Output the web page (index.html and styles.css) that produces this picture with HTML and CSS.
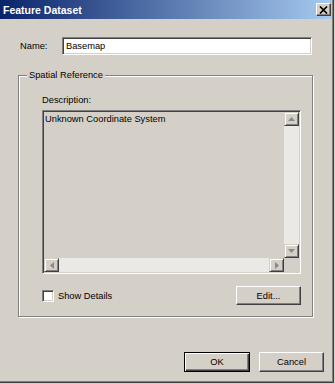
FILE: index.html
```html
<!DOCTYPE html>
<html>
<head>
<meta charset="utf-8">
<link rel="stylesheet" href="styles.css">
</head>
<body>
<div class="window">
  <div class="titlebar">
    <span class="title">Feature Dataset</span>
    <span class="close"><svg width="9" height="8" viewBox="0 0 9 8"><path d="M1 0.5 L8 7.5 M8 0.5 L1 7.5" stroke="#000" stroke-width="1.7"/></svg></span>
  </div>
  <div class="content">
    <div class="name-row">
      <span class="name-label">Name:</span>
      <div class="textbox">Basemap</div>
    </div>
    <fieldset class="group">
      <legend class="legend">Spatial Reference</legend>
      <div class="desc-label">Description:</div>
      <div class="listbox">
        <div class="list-text">Unknown Coordinate System</div>
        <div class="vscroll">
          <div class="sbtn"><svg width="7" height="4" viewBox="0 0 7 4"><path d="M3.5 0 L7 4 L0 4 Z" fill="#8a8a8a"/></svg></div>
          <div class="track"></div>
          <div class="sbtn"><svg width="7" height="4" viewBox="0 0 7 4"><path d="M0 0 L7 0 L3.5 4 Z" fill="#8a8a8a"/></svg></div>
        </div>
        <div class="hscroll">
          <div class="sbtn"><svg width="4" height="7" viewBox="0 0 4 7"><path d="M0 3.5 L4 0 L4 7 Z" fill="#8a8a8a"/></svg></div>
          <div class="track"></div>
          <div class="sbtn"><svg width="4" height="7" viewBox="0 0 4 7"><path d="M4 3.5 L0 0 L0 7 Z" fill="#8a8a8a"/></svg></div>
        </div>
        <div class="corner"></div>
      </div>
      <div class="options-row">
        <div class="check"><span class="checkbox"></span><span>Show Details</span></div>
        <div class="button edit">Edit...</div>
      </div>
    </fieldset>
    <div class="footer">
      <div class="button default ok">OK</div>
      <div class="button cancel">Cancel</div>
    </div>
  </div>
</div>
</body>
</html>
```
FILE: styles.css
```css
html, body {
  margin: 0;
  padding: 0;
  background: #d4d0c8;
}
body {
  font-family: "Liberation Sans", Arial, sans-serif;
  font-size: 9.3px;
  color: #000;
}
.window {
  width: 334px;
  height: 383px;
  box-sizing: border-box;
  border-right: 1px solid #404040;
  border-bottom: 1px solid #404040;
  box-shadow: inset -1px -1px 0 #808080;
  background: #d4d0c8;
  display: flex;
  flex-direction: column;
}
.titlebar {
  height: 19px;
  margin-right: 1px;
  background: linear-gradient(to right, #0a246a, #a6caf0);
  display: flex;
  align-items: center;
  justify-content: space-between;
  padding: 0 1px 0 3px;
}
.title {
  color: #fff;
  font-weight: bold;
  font-size: 10.5px;
}
.close {
  width: 15px;
  height: 13px;
  box-sizing: border-box;
  background: #d4d0c8;
  border: 1px solid;
  border-color: #fff #404040 #404040 #fff;
  box-shadow: inset -1px -1px 0 #808080;
  display: flex;
  align-items: center;
  justify-content: center;
}
.close svg { display: block; }
.content {
  padding: 18px 9px 0 18px;
  display: flex;
  flex-direction: column;
}
.name-row {
  display: flex;
  align-items: center;
  height: 18px;
  padding-left: 2px;
}
.name-label { width: 42px; }
.textbox {
  width: 250px;
  height: 18px;
  box-sizing: border-box;
  background: #fff;
  border: 1px solid;
  border-color: #808080 #fff #fff #808080;
  box-shadow: inset 1px 1px 0 #404040, inset -1px -1px 0 #d4d0c8;
  padding: 0 3px;
  line-height: 16px;
}
.group {
  margin: 14px 0 0 0;
  width: 295px;
  box-sizing: border-box;
  border: 1px solid #808080;
  box-shadow: 1px 1px 0 #fff, inset 1px 1px 0 #fff;
  padding: 13px 10px 11px 23px;
  min-width: 0;
}
.legend {
  padding: 0 2px;
  margin-left: -15px;
  line-height: 12px;
  background: #d4d0c8;
}
.desc-label {
  line-height: 12px;
  margin-bottom: 4px;
}
.listbox {
  width: 259px;
  height: 164px;
  box-sizing: border-box;
  border: 1px solid;
  border-color: #808080 #fff #fff #808080;
  box-shadow: inset 1px 1px 0 #404040, inset -1px -1px 0 #d4d0c8;
  padding: 1px;
  display: grid;
  grid-template-columns: 1fr 15px;
  grid-template-rows: 1fr 14px;
}
.list-text {
  padding: 1px 1px;
  line-height: 12px;
}
.vscroll {
  display: flex;
  flex-direction: column;
}
.hscroll {
  display: flex;
}
.vscroll .sbtn { height: 14px; }
.hscroll .sbtn { width: 15px; }
.track {
  flex: 1;
  background: #ebe9e5;
}
.sbtn {
  box-sizing: border-box;
  background: #d4d0c8;
  border: 1px solid;
  border-color: #d4d0c8 #404040 #404040 #d4d0c8;
  box-shadow: inset 1px 1px 0 #fff, inset -1px -1px 0 #808080;
  display: flex;
  align-items: center;
  justify-content: center;
}
.sbtn svg { display: block; }
.corner { background: #d4d0c8; }
.options-row {
  margin-top: 12px;
  width: 259px;
  height: 19px;
  display: flex;
  align-items: center;
  justify-content: space-between;
}
.check {
  display: flex;
  align-items: center;
  gap: 4px;
}
.checkbox {
  width: 12px;
  height: 12px;
  box-sizing: border-box;
  background: #fff;
  border: 1px solid;
  border-color: #808080 #fff #fff #808080;
  box-shadow: inset 1px 1px 0 #404040, inset -1px -1px 0 #d4d0c8;
}
.button {
  box-sizing: border-box;
  background: #d4d0c8;
  border: 1px solid;
  border-color: #fff #404040 #404040 #fff;
  box-shadow: inset -1px -1px 0 #808080;
  display: flex;
  align-items: center;
  justify-content: center;
}
.edit {
  width: 65px;
  height: 19px;
}
.footer {
  margin-top: 35px;
  display: flex;
  justify-content: flex-end;
  gap: 9px;
}
.ok { width: 66px; height: 20px; }
.cancel { width: 65px; height: 20px; }
.default {
  border: 1px solid #000;
  box-shadow: inset 1px 1px 0 #fff, inset -1px -1px 0 #404040, inset -2px -2px 0 #808080;
}
```
